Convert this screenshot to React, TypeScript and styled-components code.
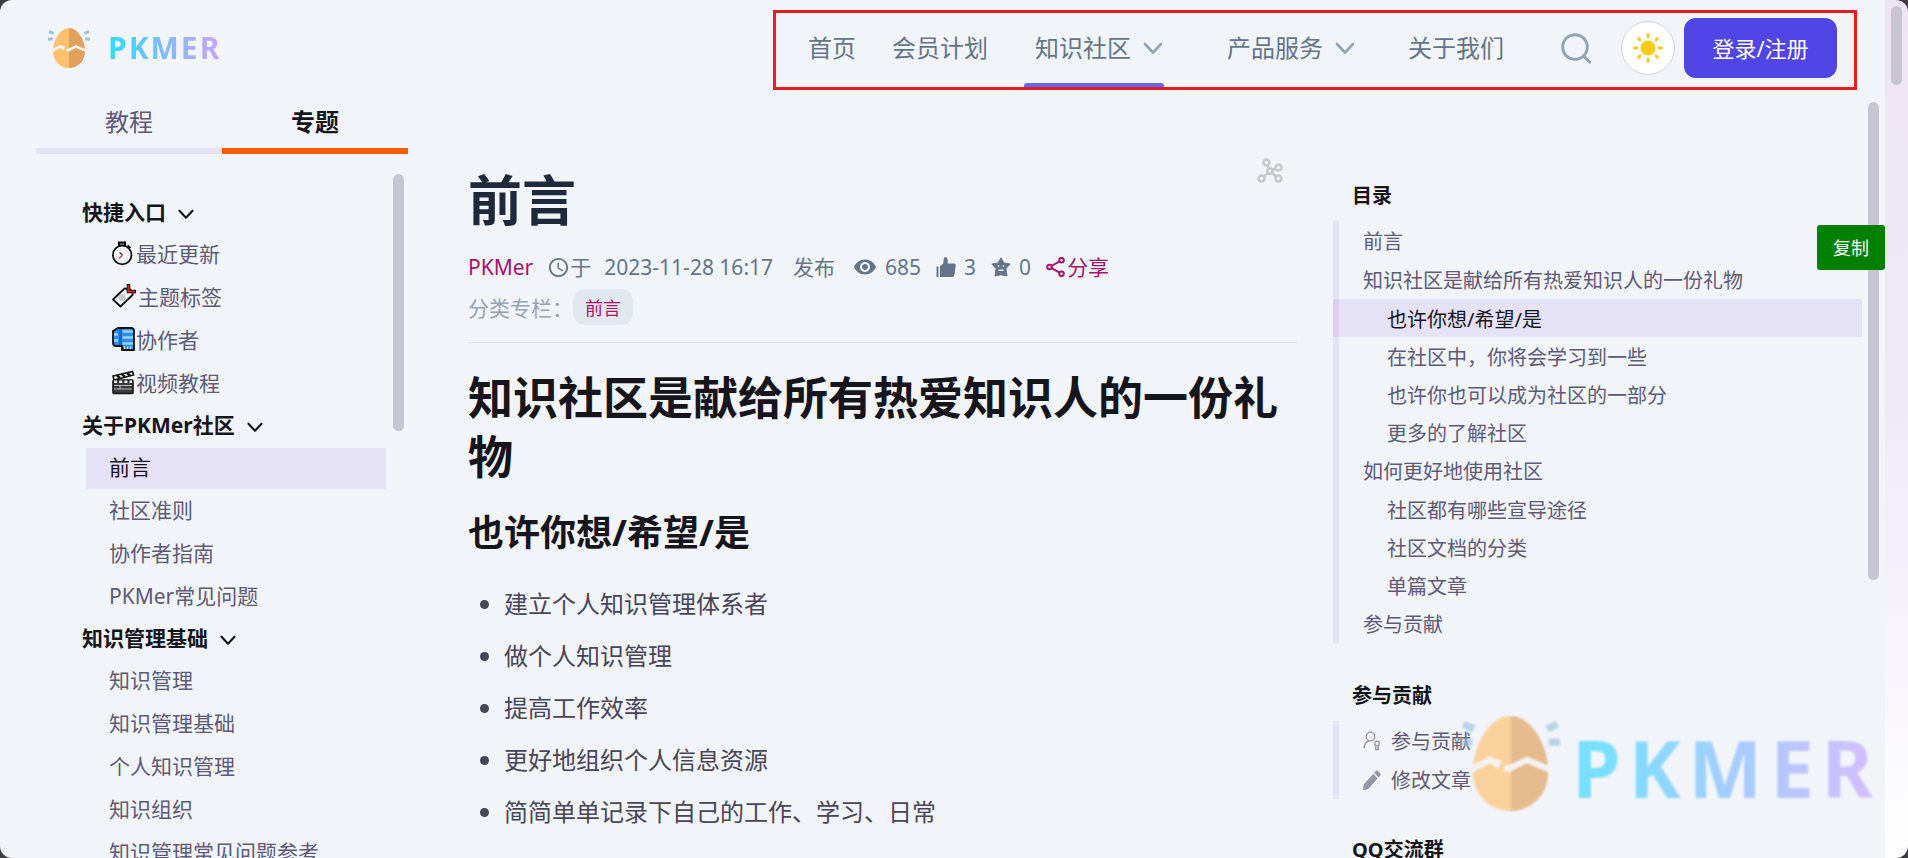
import React from 'react';
import styled, { createGlobalStyle } from 'styled-components';
import { MdAccessTime, MdVisibility } from 'react-icons/md';

const font = '"Noto Sans", "Noto Sans CJK SC", sans-serif';

const color = {
  page: '#f1f4f9',
  ink: '#17151c',
  title: '#1e293b',
  body: '#48455a',
  link: '#5e5a78',
  slate: '#64748b',
  slateLight: '#94a3b8',
  tint: '#e5e1f6',
  thumb: '#c8c5d3',
  magenta: '#a6126e',
  indigo: '#4f46e5',
  orange: '#ff5c00',
};

const GlobalStyle = createGlobalStyle`
  *, *::before, *::after { box-sizing: border-box; }
  body { margin: 0; background: #3c3b3d; font-family: ${font}; color: ${color.ink}; }
  button { font: inherit; color: inherit; border: 0; padding: 0; background: none; cursor: pointer; }
  a { color: inherit; text-decoration: none; }
  ul { list-style: none; margin: 0; padding: 0; }
  h1, h2, h3, p { margin: 0; }
  svg { display: block; flex: none; }
`;

const Shell = styled.div`
  display: flex;
  height: 100vh;
  border-radius: 12px;
  overflow: hidden;
  position: relative;
`;

const Page = styled.div`
  flex: 1;
  min-width: 0;
  display: flex;
  flex-direction: column;
  background: ${color.page};
  position: relative;
`;

const Gutter = styled.div`
  flex: none;
  width: 23px;
  padding: 6px;
  background: linear-gradient(#ede5f3 0%, #efe8f5 40%, #f2eefa 60%, #ffffff 100%);
`;

const PageThumb = styled.div`
  width: 11px;
  height: 79px;
  border-radius: 6px;
  background: ${color.thumb};
`;

const Thumb = styled.div<{ $top: number; $right: number; $height: number }>`
  position: absolute;
  top: ${(p) => p.$top}px;
  right: ${(p) => p.$right}px;
  width: 11px;
  height: ${(p) => p.$height}px;
  border-radius: 6px;
  background: ${color.thumb};
`;

/* ---------- header ---------- */

const Header = styled.header`
  flex: none;
  display: flex;
  justify-content: space-between;
  align-items: center;
  height: 96px;
  padding: 4px 28px 0 48px;
`;

const Brand = styled.a`
  display: flex;
  align-items: center;
  gap: 18px;
  padding-bottom: 4px;
`;

const Wordmark = styled.span<{ $large?: boolean }>`
  margin-top: ${(p) => (p.$large ? 4 : 0)}px;
  font-weight: 700;
  font-size: ${(p) => (p.$large ? 78 : 30)}px;
  line-height: ${(p) => (p.$large ? 96 : 40)}px;
  letter-spacing: ${(p) => (p.$large ? 8 : 2)}px;
  color: transparent;
  background: linear-gradient(90deg, #3fd6ff 10%, #7fbcff 50%, #c3a6ff 95%);
  background-clip: text;
  -webkit-background-clip: text;
`;

const NavFrame = styled.div`
  display: flex;
  height: 80px;
  padding: 0 17px 0 32px;
  border: 3px solid #ed1c24;
`;

const NavList = styled.nav`
  display: flex;
  gap: 36px;
  font-size: 24px;
  line-height: 36px;
  color: ${color.slate};
`;

const NavLink = styled.a`
  display: flex;
  align-items: center;
  padding-bottom: 4px;
  white-space: nowrap;
`;

const NavDrop = styled.button<{ $active?: boolean }>`
  position: relative;
  display: flex;
  align-items: center;
  justify-content: flex-end;
  gap: 11px;
  width: 140px;
  margin-right: 16px;
  padding-bottom: 4px;
  white-space: nowrap;

  &::after {
    content: '';
    display: ${(p) => (p.$active ? 'block' : 'none')};
    position: absolute;
    left: 0;
    right: 0;
    bottom: 0;
    height: 4px;
    border-radius: 3px 3px 0 0;
    background: #6366f1;
  }
`;

const Tools = styled.div`
  display: flex;
  align-items: center;
  gap: 9px;
  margin-left: 56px;
  padding-bottom: 4px;
`;

const SearchButton = styled.button`
  margin-right: 20px;
  color: ${color.slateLight};
`;

const ThemeButton = styled.button`
  display: flex;
  align-items: center;
  justify-content: center;
  width: 54px;
  height: 54px;
  border: 1px solid #cbd5e1;
  border-radius: 50%;
  background: #fff;
`;

const LoginButton = styled.button`
  width: 153px;
  height: 60px;
  padding-bottom: 2px;
  border-radius: 12px;
  background: ${color.indigo};
  color: #fff;
  font-size: 22px;
  white-space: nowrap;
`;

/* ---------- left column ---------- */

const Columns = styled.div`
  flex: 1;
  min-height: 0;
  display: flex;
  padding-left: 36px;
`;

const Sidebar = styled.aside`
  flex: none;
  width: 372px;
  display: flex;
  flex-direction: column;
`;

const Tabs = styled.div`
  flex: none;
  display: flex;
`;

const Tab = styled.button<{ $active?: boolean }>`
  flex: 1;
  height: 58px;
  border-bottom: 6px solid ${(p) => (p.$active ? color.orange : color.tint)};
  color: ${(p) => (p.$active ? color.ink : color.link)};
  font-size: 24px;
  line-height: 36px;
  font-weight: ${(p) => (p.$active ? 700 : 400)};
`;

const SideScroll = styled.nav`
  position: relative;
  flex: 1;
  min-height: 0;
  overflow: hidden;
  padding: 39px 22px 0 46px;
  font-size: 21px;
`;

const GroupTitle = styled.button`
  display: flex;
  align-items: center;
  gap: 11px;
  height: 41px;
  padding-bottom: 6px;
  font-weight: 700;

  svg {
    margin-top: 6px;
  }
`;

const SideList = styled.ul`
  display: flex;
  flex-direction: column;
  gap: 2px;
  padding: 1px 0 1px 4px;
`;

const SideLink = styled.a<{ $active?: boolean }>`
  display: flex;
  align-items: center;
  height: 41px;
  padding: 0 0 6px 23px;
  white-space: nowrap;
  background: ${(p) => (p.$active ? color.tint : 'transparent')};
  color: ${(p) => (p.$active ? color.ink : color.link)};
`;

/* ---------- article ---------- */

const Article = styled.main`
  flex: 1;
  min-width: 0;
  padding: 62px 36px 0 60px;
`;

const TitleRow = styled.div`
  display: flex;
  justify-content: space-between;
  align-items: flex-start;
  padding-right: 14px;
`;

const Title = styled.h1`
  padding-top: 10px;
  font-size: 54px;
  line-height: 64px;
  color: ${color.title};
`;

const Meta = styled.div`
  display: flex;
  align-items: center;
  height: 40px;
  margin-top: 15px;
  font-size: 21px;
  line-height: 30px;
  color: ${color.slate};
  white-space: nowrap;
`;

const MetaItem = styled.span<{ $gap: number }>`
  display: flex;
  align-items: center;
  gap: ${(p) => p.$gap}px;
  margin-right: 15px;
`;

const MetaDate = styled.time`
  margin: 0 20px 0 -2px;
`;

const MetaState = styled.span`
  margin-right: 18px;
`;

const Accent = styled.a`
  display: flex;
  align-items: center;
  gap: 2px;
  margin-right: 14px;
  color: ${color.magenta};
`;

const Category = styled.div`
  display: flex;
  align-items: center;
  height: 40px;
  font-size: 21px;
  color: ${color.slateLight};
`;

const Chip = styled.a`
  display: flex;
  align-items: center;
  height: 36px;
  padding: 0 12px;
  border-radius: 12px;
  background: #e2e8f0;
  color: ${color.magenta};
  font-size: 18px;
`;

const Divider = styled.hr`
  height: 1px;
  margin: 15px 0 25px;
  border: 0;
  background: #dfe2f4;
`;

const HeadingOne = styled.h2`
  font-size: 45px;
  line-height: 59px;
`;

const HeadingTwo = styled.h3`
  margin-top: 23px;
  font-size: 36px;
  line-height: 48px;
`;

const Bullets = styled.ul`
  margin-top: 21px;
  padding-left: 36px;
  list-style: disc;
  font-size: 24px;
  line-height: 52px;
  color: ${color.body};
`;

/* ---------- right column ---------- */

const Outline = styled.aside`
  flex: none;
  width: 552px;
  padding-top: 73px;
  overflow: hidden;
  font-size: 20px;
`;

const OutlineTitle = styled.h2`
  padding: 2px 0 0 19px;
  font-size: 20px;
  line-height: 50px;
`;

const OutlineList = styled.ul<{ $gap: number }>`
  margin: 0 23px ${(p) => p.$gap}px 0;
  background: linear-gradient(${color.tint}, ${color.tint}) left / 6px 100% no-repeat;
`;

const OutlineLink = styled.a<{ $sub?: boolean; $active?: boolean }>`
  display: flex;
  align-items: center;
  gap: 10px;
  height: ${(p) => (p.$sub ? 38 : 39)}px;
  padding-left: ${(p) => (p.$sub ? 48 : 24)}px;
  border-left: 6px solid ${(p) => (p.$active ? '#dacef3' : 'transparent')};
  background: ${(p) => (p.$active ? color.tint : 'transparent')};
  background-clip: padding-box;
  color: ${(p) => (p.$active ? color.ink : color.link)};
  white-space: nowrap;
`;

const CopyButton = styled.button`
  position: absolute;
  top: 225px;
  right: 0;
  width: 68px;
  height: 45px;
  padding-bottom: 2px;
  border-radius: 3px;
  background: #008000;
  color: #fff;
  font-size: 18px;
`;

const Watermark = styled.div`
  position: absolute;
  right: 4px;
  bottom: 42px;
  display: flex;
  align-items: flex-start;
  gap: 12px;
  opacity: 0.68;
  filter: blur(1px);
  pointer-events: none;
`;

/* ---------- icons ---------- */

const Egg = ({ width, height }: { width: number; height: number }) => (
  <svg width={width} height={height} viewBox="0 0 42 40" preserveAspectRatio="none" aria-hidden="true">
    <path d="M21 0C12 0 5 12.500 5 23.500C5 33 12 40 21 40Z" fill="#ffc170" />
    <path d="M21 0C30 0 37 12.500 37 23.500C37 33 30 40 21 40Z" fill="#e0a15c" />
    <path d="M4.500 22.500L12 18.500L15.500 19.800L14.500 21.500M18.500 21.500L20 22.300L28 18.500L37.500 22.500" fill="none" stroke="#f6f3f2" strokeWidth="2.600" />
    <g stroke="#9fc3dc" strokeWidth="3">
      <path d="M1 3.500L5.500 5.300M0 11H4.800M36.500 5.300L41 3.500M37.200 11H42" />
    </g>
  </svg>
);

const Chevron = ({ size = 22, stroke }: { size?: number; stroke: string }) => (
  <svg width={size} height={size} viewBox="0 0 22 22" fill="none" stroke={stroke} strokeWidth="2.600" strokeLinecap="round" strokeLinejoin="round" aria-hidden="true">
    <path d="M3 7L11 15.500L19 7" />
  </svg>
);

const SearchIcon = () => (
  <svg width="32" height="32" viewBox="0 0 32 32" fill="none" stroke="currentColor" strokeWidth="3" strokeLinecap="round" aria-hidden="true">
    <circle cx="15" cy="15" r="12.300" />
    <path d="M24 24.500L29.500 30" />
  </svg>
);

const SunIcon = () => (
  <svg width="30" height="30" viewBox="0 0 30 30" stroke="#facc15" strokeWidth="2.800" strokeLinecap="round" aria-hidden="true">
    <circle cx="15" cy="15" r="7.500" fill="#facc15" stroke="none" />
    <path d="M15 1.400V4M15 26V28.600M1.400 15H4M26 15H28.600M5.500 5.500L7 7M23 23L24.500 24.500M5.500 24.500L7 23M23 7L24.500 5.500" />
  </svg>
);

const StopwatchIcon = () => (
  <svg width="27" height="26" viewBox="0 0 27 26" aria-hidden="true">
    <path d="M10 2.500h6v4h-6zM18.500 5.500l3 2.500" fill="#777" stroke="#111" strokeWidth="2" />
    <circle cx="13.200" cy="15" r="9.300" fill="#fbfbfb" stroke="#111" strokeWidth="1.800" />
    <circle cx="13.200" cy="15" r="6.300" fill="none" stroke="#c9c9cf" strokeWidth="1.200" strokeDasharray="1.200 2.100" />
    <path d="M10.500 12.500L13.500 15" stroke="#222" strokeWidth="1.200" />
    <path d="M13.500 15L10 18.500" stroke="#e5393c" strokeWidth="1.400" />
  </svg>
);

const LabelIcon = () => (
  <svg width="29" height="26" viewBox="0 0 29 26" aria-hidden="true">
    <path d="M4 16.500L15.500 5.500L21 6.500L23.500 9V12L11.500 23.500Z" fill="#f4f4f6" stroke="#111" strokeWidth="1.800" strokeLinejoin="round" />
    <circle cx="13" cy="14.500" r="3.500" fill="#c9cacf" />
    <path d="M19.500 1V8.500H27" fill="none" stroke="#111" strokeWidth="3.600" />
    <path d="M19.500 2V8.500H26" fill="none" stroke="#c72a1e" strokeWidth="2" />
  </svg>
);

const ScarfIcon = () => (
  <svg width="27" height="26" viewBox="0 0 27 26" aria-hidden="true">
    <path d="M4 5L9 2H22Q25 2 25 5V24H13V20H7Q4 20 4 17Z" fill="#2f8fe0" stroke="#111" strokeWidth="1.800" strokeLinejoin="round" />
    <path d="M13.500 5.500H24M13.500 11.500H24M13.500 17.500H24M5 8.500H9M5 14.500H9" stroke="#9bd0f7" strokeWidth="2.400" />
    <path d="M11.500 3V19" stroke="#0a6fd0" strokeWidth="3" />
    <path d="M15.500 20.500V23M18.500 20.500V23M21.500 20.500V23" stroke="#dcefff" strokeWidth="1.200" />
  </svg>
);

const ClapperIcon = () => (
  <svg width="27" height="26" viewBox="0 0 27 26" aria-hidden="true">
    <path d="M4 7L23.500 2.500L24.500 6L5 11Z" fill="#f2f2f2" stroke="#161616" strokeWidth="1.600" />
    <path d="M8 6.500L11 9M13 5.300L16 7.800M18 4L21 6.500" stroke="#161616" strokeWidth="2.400" />
    <rect x="4" y="11" width="20" height="13.500" rx="1" fill="#3b3b3d" stroke="#161616" strokeWidth="1.600" />
    <path d="M5 12.800H23" stroke="#f2f2f2" strokeWidth="2.400" strokeDasharray="3 2.200" />
    <path d="M5 16.500H23M5 20H23M11 16.500V20" stroke="#b9b9bd" />
  </svg>
);

const NetworkIcon = () => (
  <svg width="26" height="26" viewBox="0 0 26 26" fill="none" stroke="#c8c8c8" strokeWidth="2.600" aria-hidden="true">
    <circle cx="9.500" cy="4.500" r="3" />
    <circle cx="21.500" cy="9.500" r="3" />
    <circle cx="4.500" cy="20.500" r="3" />
    <circle cx="21.500" cy="20.500" r="3" />
    <circle cx="13" cy="13" r="2.600" />
    <path d="M10.500 7.500L12 10.500M18.800 10.800L15.500 12M6.800 18.500L11 15M19.300 18.500L15 15" />
  </svg>
);

const ThumbIcon = () => (
  <svg width="20" height="20" viewBox="0 0 20 20" fill="currentColor" aria-hidden="true">
    <path d="M0.500 9.500H2.500V20H0.500ZM4 9L7.300 6.500L7.800 1.500Q8 0 9.500 0Q11.500 0 11.700 2.500V6.500H18Q20 6.500 19.700 8.500L18.500 17.500Q18.200 20 16 20H4Z" />
  </svg>
);

const StarIcon = () => (
  <svg width="20" height="20" viewBox="0 0 20 20" aria-hidden="true">
    <path d="M10 0.800L12.800 6L19.200 7L15 11.500L16 19L10 17.800L4 19L5 11.500L0.800 7L7.200 6Z" fill="currentColor" stroke="currentColor" strokeLinejoin="round" />
    <path d="M6.800 9H8.300M11.700 9H13.200M7.500 13.300H12.500" stroke={color.page} strokeWidth="1.400" />
  </svg>
);

const ShareIcon = () => (
  <svg width="19" height="20" viewBox="0 0 19 20" fill="none" stroke="currentColor" strokeWidth="2" aria-hidden="true">
    <circle cx="3.500" cy="10" r="2.300" />
    <circle cx="15.500" cy="3.200" r="2.300" />
    <circle cx="15.500" cy="16.800" r="2.300" />
    <path d="M5.500 9L13.500 4.400M5.500 11L13.500 15.600" />
  </svg>
);

const ContributorIcon = () => (
  <svg width="18" height="20" viewBox="0 0 18 20" fill="none" stroke="#9794aa" strokeWidth="1.300" aria-hidden="true">
    <circle cx="7.500" cy="5.500" r="4.300" />
    <path d="M1 17Q1.500 11 6 10" />
    <circle cx="14" cy="12.500" r="2.300" />
    <path d="M12.700 14.800V18.500H15.300V14.800" />
  </svg>
);

const PencilIcon = () => (
  <svg width="18" height="20" viewBox="0 0 20 20" preserveAspectRatio="none" fill="#9794aa" aria-hidden="true">
    <path d="M0 20L0.800 14.500L11.500 3.800L16.200 8.500L5.500 19.200ZM12.600 2.700L14.500 0.800Q15.500 0 16.500 0.800L19.200 3.500Q20 4.500 19.200 5.500L17.300 7.400Z" />
  </svg>
);

/* ---------- content ---------- */

type SideItem = { label: string; icon?: React.ReactNode; active?: boolean };

const groups: { title: string; items: SideItem[] }[] = [
  {
    title: '快捷入口',
    items: [
      { label: '最近更新', icon: <StopwatchIcon /> },
      { label: '主题标签', icon: <LabelIcon /> },
      { label: '协作者', icon: <ScarfIcon /> },
      { label: '视频教程', icon: <ClapperIcon /> },
    ],
  },
  {
    title: '关于PKMer社区',
    items: [{ label: '前言', active: true }, { label: '社区准则' }, { label: '协作者指南' }, { label: 'PKMer常见问题' }],
  },
  {
    title: '知识管理基础',
    items: [
      { label: '知识管理' },
      { label: '知识管理基础' },
      { label: '个人知识管理' },
      { label: '知识组织' },
      { label: '知识管理常见问题参考' },
    ],
  },
];

const outline: { label: string; sub?: boolean; active?: boolean }[] = [
  { label: '前言' },
  { label: '知识社区是献给所有热爱知识人的一份礼物' },
  { label: '也许你想/希望/是', sub: true, active: true },
  { label: '在社区中，你将会学习到一些', sub: true },
  { label: '也许你也可以成为社区的一部分', sub: true },
  { label: '更多的了解社区', sub: true },
  { label: '如何更好地使用社区' },
  { label: '社区都有哪些宣导途径', sub: true },
  { label: '社区文档的分类', sub: true },
  { label: '单篇文章', sub: true },
  { label: '参与贡献' },
];

const points = [
  '建立个人知识管理体系者',
  '做个人知识管理',
  '提高工作效率',
  '更好地组织个人信息资源',
  '简简单单记录下自己的工作、学习、日常',
];

export default function App() {
  return (
    <>
      <GlobalStyle />
      <Shell>
        <Page>
          <Header>
            <Brand href="#home">
              <Egg width={42} height={40} />
              <Wordmark>PKMER</Wordmark>
            </Brand>
            <NavFrame>
              <NavList>
                <NavLink href="#home">首页</NavLink>
                <NavLink href="#plan">会员计划</NavLink>
                <NavDrop $active>
                  知识社区
                  <Chevron stroke={color.slateLight} />
                </NavDrop>
                <NavDrop>
                  产品服务
                  <Chevron stroke={color.slateLight} />
                </NavDrop>
                <NavLink href="#about">关于我们</NavLink>
              </NavList>
              <Tools>
                <SearchButton aria-label="搜索">
                  <SearchIcon />
                </SearchButton>
                <ThemeButton aria-label="切换主题">
                  <SunIcon />
                </ThemeButton>
                <LoginButton>登录/注册</LoginButton>
              </Tools>
            </NavFrame>
          </Header>

          <Columns>
            <Sidebar>
              <Tabs>
                <Tab>教程</Tab>
                <Tab $active>专题</Tab>
              </Tabs>
              <SideScroll>
                {groups.map((group) => (
                  <section key={group.title}>
                    <GroupTitle>
                      {group.title}
                      <Chevron size={18} stroke={color.ink} />
                    </GroupTitle>
                    <SideList>
                      {group.items.map((item) => (
                        <li key={item.label}>
                          <SideLink href="#doc" $active={item.active}>
                            {item.icon}
                            {item.label}
                          </SideLink>
                        </li>
                      ))}
                    </SideList>
                  </section>
                ))}
                <Thumb $top={20} $right={4} $height={257} />
              </SideScroll>
            </Sidebar>

            <Article>
              <TitleRow>
                <Title>前言</Title>
                <button aria-label="关系图谱">
                  <NetworkIcon />
                </button>
              </TitleRow>
              <Meta>
                <Accent href="#author">PKMer</Accent>
                <MetaItem $gap={0}>
                  <MdAccessTime size={23} />于
                </MetaItem>
                <MetaDate>2023-11-28 16:17</MetaDate>
                <MetaState>发布</MetaState>
                <MetaItem $gap={8}>
                  <MdVisibility size={24} />
                  685
                </MetaItem>
                <MetaItem $gap={8}>
                  <ThumbIcon />3
                </MetaItem>
                <MetaItem $gap={8}>
                  <StarIcon />0
                </MetaItem>
                <Accent href="#share">
                  <ShareIcon />
                  分享
                </Accent>
              </Meta>
              <Category>
                分类专栏：<Chip href="#category">前言</Chip>
              </Category>
              <Divider />
              <HeadingOne>知识社区是献给所有热爱知识人的一份礼物</HeadingOne>
              <HeadingTwo>也许你想/希望/是</HeadingTwo>
              <Bullets>
                {points.map((point) => (
                  <li key={point}>{point}</li>
                ))}
              </Bullets>
            </Article>

            <Outline>
              <OutlineTitle>目录</OutlineTitle>
              <OutlineList $gap={26}>
                {outline.map((entry) => (
                  <li key={entry.label}>
                    <OutlineLink href="#section" $sub={entry.sub} $active={entry.active}>
                      {entry.label}
                    </OutlineLink>
                  </li>
                ))}
              </OutlineList>
              <OutlineTitle>参与贡献</OutlineTitle>
              <OutlineList $gap={24}>
                <li>
                  <OutlineLink href="#contribute">
                    <ContributorIcon />
                    参与贡献
                  </OutlineLink>
                </li>
                <li>
                  <OutlineLink href="#edit">
                    <PencilIcon />
                    修改文章
                  </OutlineLink>
                </li>
              </OutlineList>
              <OutlineTitle>QQ交流群</OutlineTitle>
            </Outline>
          </Columns>

          <Thumb $top={102} $right={6} $height={478} />
          <CopyButton>复制</CopyButton>
          <Watermark aria-hidden="true">
            <Egg width={99} height={95} />
            <Wordmark $large>PKMER</Wordmark>
          </Watermark>
        </Page>
        <Gutter>
          <PageThumb />
        </Gutter>
      </Shell>
    </>
  );
}
